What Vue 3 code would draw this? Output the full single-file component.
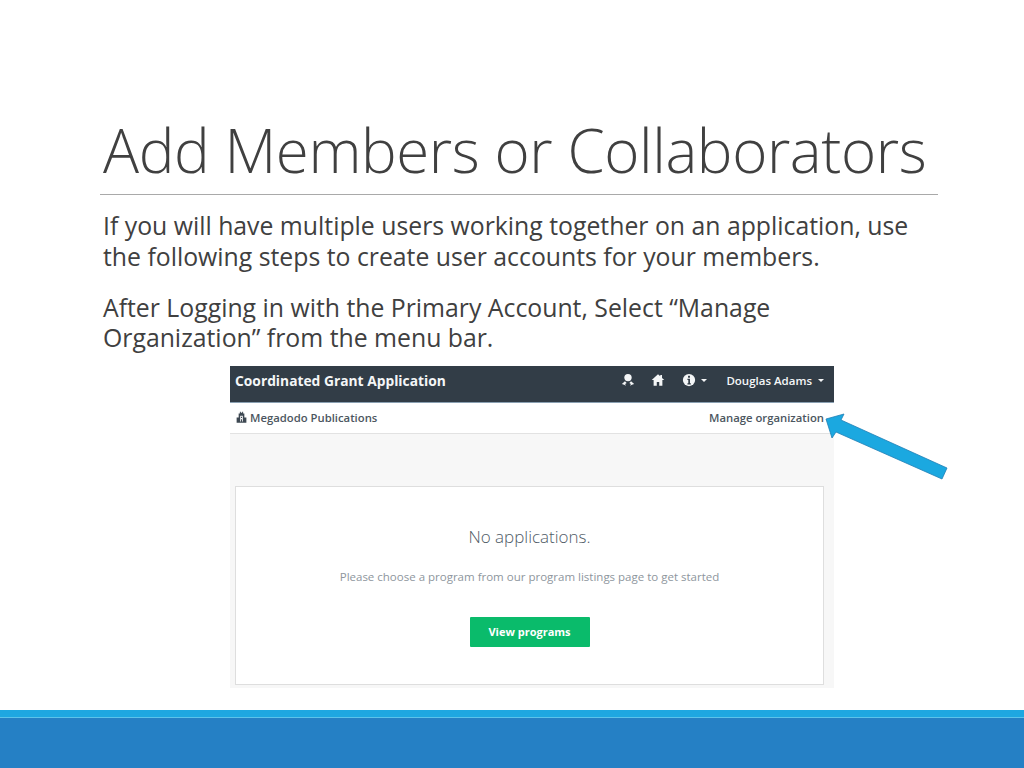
<script setup>
const heading = 'Add Members or Collaborators'
</script>

<template>
  <div class="slide">
    <header class="head">
      <h1 class="title">{{ heading }}</h1>
    </header>
    <section class="copy">
      <p class="para">If you will have multiple users working together on an application, use the following steps to create user accounts for your members.</p>
      <p class="para second">After Logging in with the Primary Account, Select “Manage Organization” from the menu bar.</p>
    </section>
    <div class="shot-row">
      <div class="shot">
        <div class="topbar">
          <span class="brand">Coordinated Grant Application</span>
          <div class="top-icons">
            <svg class="ico ribbon" viewBox="0 0 16 16"><circle cx="8" cy="5.200" r="4.200" fill="#f4f6f7"/><path d="M1 12.500l3.500-3 2 1.800-1.800 1.200 1 2.200-2.200-1.400zM15 12.500l-3.500-3-2 1.800 1.800 1.200-1 2.200 2.200-1.400z" fill="#f4f6f7"/></svg>
            <svg class="ico home" viewBox="0 0 16 16"><path d="M8 1.500L0.800 8h2.200v6.500h3.600v-4.300h2.800v4.300h3.600V8h2.200L12.600 5.600V2.400h-2v1.400z" fill="#f4f6f7"/></svg>
            <svg class="ico info" viewBox="0 0 16 16"><circle cx="8" cy="8" r="7" fill="#f4f6f7"/><rect x="6.900" y="3.200" width="2.200" height="2.200" fill="#323d47"/><path d="M6.200 6.700h2.900v5h1v1.300H6.200v-1.300h1v-3.700h-1z" fill="#323d47"/></svg>
            <span class="caret info-caret"></span>
            <span class="user">Douglas Adams</span>
            <span class="caret"></span>
          </div>
        </div>
        <div class="subbar">
          <span class="org">
            <svg class="org-ico" viewBox="0 0 16 16"><path d="M4.500 3h1.500V1h1.200v1h1.600V1H10v2h1.500v5H14v6.500H2V8h2.500z" fill="#3d4852"/><path d="M6.400 13V5.800h3.200V13h-1V10H7.400v3zM7.400 7v1.700h1.200V7z" fill="#fff"/></svg>
            Megadodo Publications
          </span>
          <span class="manage">Manage organization</span>
        </div>
        <div class="canvas">
          <div class="card">
            <div class="empty">No applications.</div>
            <div class="hint">Please choose a program from our program listings page to get started</div>
            <button class="cta" type="button">View programs</button>
          </div>
        </div>
      </div>
      <svg class="arrow" viewBox="0 0 124 68"><path d="M1 6L19 1L16 7L122 55L117 66L11 19L7 25Z" fill="#1ba8e0" stroke="#1f7fb5" stroke-width="0.800"/></svg>
    </div>
    <footer class="foot">
      <div class="foot-light"></div>
      <div class="foot-dark"></div>
    </footer>
  </div>
</template>

<style scoped>
.slide {
  position: relative;
  width: 1024px;
  height: 768px;
  overflow: hidden;
  display: flex;
  flex-direction: column;
  background: #fff;
  font-family: "Open Sans", "Liberation Sans", sans-serif;
}
.head {
  margin: 0 86px 0 100px;
  padding: 0 3px;
  height: 195px;
  box-sizing: border-box;
  border-bottom: 1px solid #a9a9a9;
  display: flex;
  align-items: flex-end;
}
.title {
  margin: 0 0 8px;
  font-family: "Open Sans", "Liberation Sans", sans-serif;
  font-weight: 300;
  font-size: 60px;
  line-height: 72px;
  letter-spacing: -0.400px;
  color: #404040;
  white-space: nowrap;
}
.copy {
  margin: 15px 100px 0 103px;
  font-family: "Open Sans", "Liberation Sans", sans-serif;
  color: #404040;
  font-size: 24.800px;
  line-height: 30.500px;
}
.para { margin: 0; }
.second { margin-top: 20.500px; width: 720px; }
.shot-row {
  margin: 13.500px 0 0 230px;
  position: relative;
}
.shot {
  width: 604px;
  height: 322px;
  display: flex;
  flex-direction: column;
  background: #f7f7f7;
  font-family: "Open Sans", "Liberation Sans", sans-serif;
}
.topbar {
  height: 36px;
  background: #323d47;
  border-bottom: 1px solid #8aa0b2;
  display: flex;
  align-items: center;
  justify-content: space-between;
  padding: 0 10px 0 5px;
  color: #f4f6f7;
  flex: none;
}
.brand { font-size: 13.800px; font-weight: 700; position: relative; top: -4px; }
.top-icons { display: flex; align-items: center; position: relative; top: -4px; }
.ico { width: 14px; height: 14px; display: block; }
.home { margin-left: 16px; }
.info { margin-left: 17px; }
.caret {
  width: 0;
  height: 0;
  border-left: 3px solid transparent;
  border-right: 3px solid transparent;
  border-top: 3px solid #f4f6f7;
  margin-left: 6px;
}
.info-caret { margin-right: 19px; margin-left: 5px; }
.user { font-size: 11.500px; font-weight: 600; }
.subbar {
  flex: none;
  background: #fff;
  border-bottom: 1px solid #e2e2e2;
  display: flex;
  align-items: center;
  justify-content: space-between;
  padding: 0 10px 2px 5px;
  box-sizing: border-box;
  height: 31px;
  color: #4c5660;
  font-size: 11.300px;
  font-weight: 600;
}
.org { display: flex; align-items: center; gap: 2px; }
.org-ico { width: 13px; height: 13px; }
.canvas {
  flex: 1;
  padding: 52px 10px 3px 5px;
  display: flex;
}
.card {
  flex: 1;
  background: #fff;
  border: 1px solid #dedede;
  display: flex;
  flex-direction: column;
  align-items: center;
}
.empty {
  margin-top: 38px;
  font-size: 17px;
  font-weight: 300;
  line-height: 24px;
  color: #4f5b66;
}
.hint {
  margin-top: 20px;
  font-size: 11.500px;
  line-height: 16px;
  color: #8e969d;
}
.cta {
  margin-top: 32px;
  width: 120px;
  height: 30px;
  padding: 0 0 2px;
  border: 0;
  border-radius: 1px;
  background: #0abb6b;
  color: #fff;
  font-family: inherit;
  font-size: 11px;
  font-weight: 700;
}
.arrow {
  position: absolute;
  left: 595px;
  top: 47px;
  width: 124px;
  height: 68px;
}
.foot {
  margin-top: auto;
  display: flex;
  flex-direction: column;
}
.foot-light { height: 7px; background: #1ea7e1; border-bottom: 1px solid #5cc3ea; }
.foot-dark { height: 50px; background: #2580c5; }
</style>
